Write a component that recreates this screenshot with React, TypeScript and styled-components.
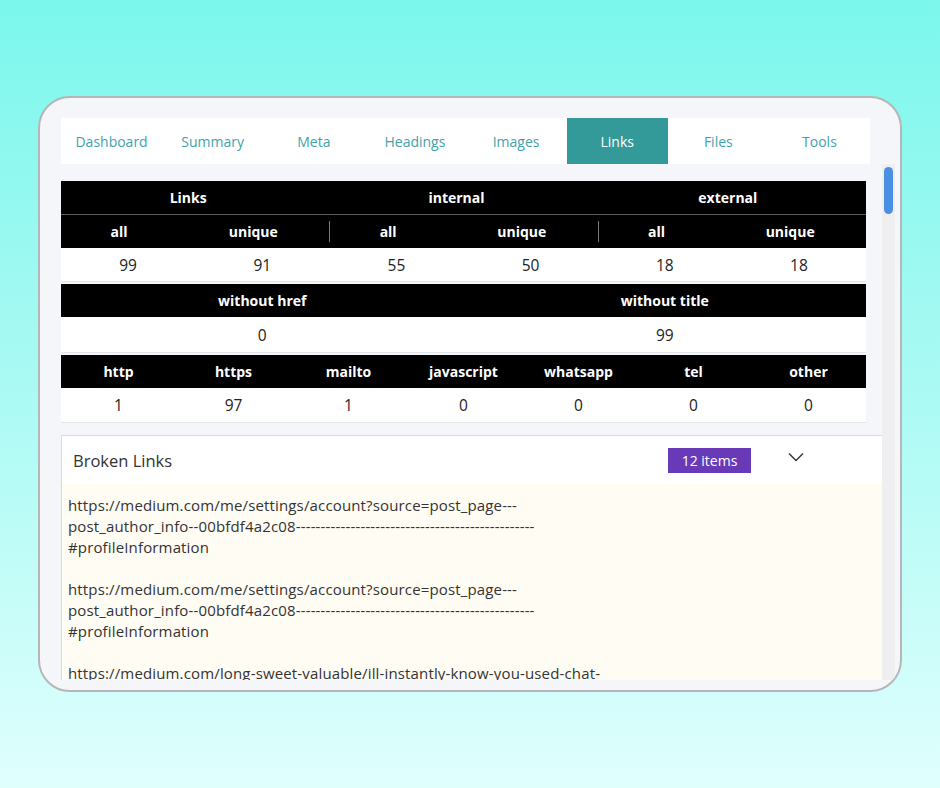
import React from "react";
import styled, { createGlobalStyle } from "styled-components";

const GlobalStyle = createGlobalStyle`
  html, body {
    margin: 0;
    padding: 0;
    height: 100%;
  }
  body {
    background: linear-gradient(180deg, #7cf7ec 0%, #abfaf4 50%, #dffffd 100%);
    font-family: "Open Sans", "Noto Sans", sans-serif;
  }
  #root {
    height: 100%;
  }
`;

const Page = styled.div`
  height: 788px;
  display: flex;
  align-items: center;
  justify-content: center;
`;

const Frame = styled.div`
  box-sizing: border-box;
  width: 864px;
  height: 596px;
  border: 2px solid #b6b6b6;
  border-radius: 32px;
  background: #f5f6fa;
  overflow: hidden;
  display: flex;
  flex-direction: column;
`;

const TabBar = styled.nav`
  margin: 20px 0 0 21px;
  width: 809px;
  height: 46px;
  flex: none;
  display: grid;
  grid-template-columns: repeat(8, 1fr);
  background: #ffffff;
`;

const Tab = styled.div<{ $active?: boolean }>`
  display: flex;
  align-items: center;
  justify-content: center;
  font-size: 14px;
  color: ${(p) => (p.$active ? "#ffffff" : "#3fa2ab")};
  background: ${(p) => (p.$active ? "#339999" : "transparent")};
`;

const Body = styled.div`
  flex: 1;
  min-height: 0;
  display: flex;
  padding-bottom: 10px;
`;

const Viewport = styled.div`
  flex: 1;
  min-width: 0;
  overflow: hidden;
  padding: 17px 0 0 21px;
`;

const Track = styled.div`
  width: 13px;
  margin-right: 5px;
  background: #efeff2;
  padding-top: 3px;
  display: flex;
  justify-content: center;
`;

const Thumb = styled.div`
  width: 9px;
  height: 47px;
  border-radius: 5px;
  background: #4a8fe2;
`;

const StatBlock = styled.div<{ $gap: number }>`
  width: 805px;
  margin-bottom: ${(p) => p.$gap}px;
`;

const HeadRow = styled.div<{ $cols: number; $divider?: boolean }>`
  display: grid;
  grid-template-columns: repeat(${(p) => p.$cols}, 1fr);
  height: 33px;
  background: #000;
  border-bottom: ${(p) => (p.$divider ? "1px solid #5c5c5c" : "none")};
`;

const HeadCell = styled.div<{ $shift?: number }>`
  display: flex;
  align-items: center;
  justify-content: center;
  color: #ffffff;
  font-weight: 700;
  font-size: 14px;
  padding-right: ${(p) => p.$shift ?? 0}px;
`;

const SubGroup = styled.div<{ $divider?: boolean }>`
  align-self: center;
  height: 21px;
  display: grid;
  grid-template-columns: 1fr 1fr;
  border-left: ${(p) => (p.$divider ? "1px solid #7a7a7a" : "none")};
`;

const ValueRow = styled.div<{ $cols: number; $h: number }>`
  display: grid;
  grid-template-columns: repeat(${(p) => p.$cols}, 1fr);
  height: ${(p) => p.$h}px;
  background: #ffffff;
  border-bottom: 1px solid #e4e5ea;
`;

const ValueCell = styled.div`
  display: flex;
  align-items: center;
  justify-content: center;
  color: #222;
  font-size: 15.5px;
`;

const Panel = styled.section`
  border: 1px solid #dadada;
  border-right: none;
  background: #fff;
`;

const PanelHeader = styled.div`
  height: 48px;
  display: flex;
  align-items: center;
  padding-left: 11px;
`;

const PanelTitle = styled.h3`
  flex: 1;
  margin: 0;
  font-size: 16.5px;
  font-weight: 400;
  color: #333;
`;

const Badge = styled.span`
  height: 25px;
  width: 83px;
  box-sizing: border-box;
  display: flex;
  align-items: center;
  justify-content: center;
  background: #683ab7;
  color: #fff;
  font-size: 14px;
`;

const Chevron = styled.svg`
  margin: 0 78px 6px 37px;
  flex: none;
`;

const PanelContent = styled.div`
  background: #fffcf3;
  padding: 11px 6px 0;
  font-size: 15px;
  letter-spacing: 0.15px;
  line-height: 21px;
  color: #333;
`;

const LinkItem = styled.p`
  margin: 0 0 21px;
`;

const DASHES = "------------------------------------------------";

const brokenLinks: string[][] = [
  [
    "https://medium.com/me/settings/account?source=post_page---",
    "post_author_info--00bfdf4a2c08" + DASHES,
    "#profileInformation",
  ],
  [
    "https://medium.com/me/settings/account?source=post_page---",
    "post_author_info--00bfdf4a2c08" + DASHES,
    "#profileInformation",
  ],
  [
    "https://medium.com/long-sweet-valuable/ill-instantly-know-you-used-chat-",
  ],
];

const tabs = ["Dashboard", "Summary", "Meta", "Headings", "Images", "Links", "Files", "Tools"];

export default function App() {
  return (
    <>
      <GlobalStyle />
      <Page>
        <Frame>
          <TabBar>
            {tabs.map((t) => (
              <Tab key={t} $active={t === "Links"}>
                {t}
              </Tab>
            ))}
          </TabBar>
          <Body>
            <Viewport>
              <StatBlock $gap={2}>
                <HeadRow $cols={3} $divider>
                  <HeadCell $shift={14}>Links</HeadCell>
                  <HeadCell $shift={14}>internal</HeadCell>
                  <HeadCell $shift={8}>external</HeadCell>
                </HeadRow>
                <HeadRow $cols={3}>
                  <SubGroup>
                    <HeadCell $shift={18}>all</HeadCell>
                    <HeadCell $shift={18}>unique</HeadCell>
                  </SubGroup>
                  <SubGroup $divider>
                    <HeadCell $shift={18}>all</HeadCell>
                    <HeadCell $shift={18}>unique</HeadCell>
                  </SubGroup>
                  <SubGroup $divider>
                    <HeadCell $shift={18}>all</HeadCell>
                    <HeadCell $shift={18}>unique</HeadCell>
                  </SubGroup>
                </HeadRow>
                <ValueRow $cols={6} $h={33}>
                  {["99", "91", "55", "50", "18", "18"].map((v, i) => (
                    <ValueCell key={i}>{v}</ValueCell>
                  ))}
                </ValueRow>
              </StatBlock>

              <StatBlock $gap={2}>
                <HeadRow $cols={2}>
                  <HeadCell>without href</HeadCell>
                  <HeadCell>without title</HeadCell>
                </HeadRow>
                <ValueRow $cols={2} $h={35}>
                  <ValueCell>0</ValueCell>
                  <ValueCell>99</ValueCell>
                </ValueRow>
              </StatBlock>

              <StatBlock $gap={12}>
                <HeadRow $cols={7}>
                  {["http", "https", "mailto", "javascript", "whatsapp", "tel", "other"].map((h) => (
                    <HeadCell key={h}>{h}</HeadCell>
                  ))}
                </HeadRow>
                <ValueRow $cols={7} $h={34}>
                  {["1", "97", "1", "0", "0", "0", "0"].map((v, i) => (
                    <ValueCell key={i}>{v}</ValueCell>
                  ))}
                </ValueRow>
              </StatBlock>

              <Panel>
                <PanelHeader>
                  <PanelTitle>Broken Links</PanelTitle>
                  <Badge>12 items</Badge>
                  <Chevron width="16" height="10" viewBox="0 0 16 10" fill="none">
                    <path d="M1 1.5 L8 8.5 L15 1.5" stroke="#333" strokeWidth="1.4" />
                  </Chevron>
                </PanelHeader>
                <PanelContent>
                  {brokenLinks.map((lines, i) => (
                    <LinkItem key={i}>
                      {lines.map((l, j) => (
                        <React.Fragment key={j}>
                          {j > 0 && <br />}
                          {l}
                        </React.Fragment>
                      ))}
                    </LinkItem>
                  ))}
                </PanelContent>
              </Panel>
            </Viewport>
            <Track>
              <Thumb />
            </Track>
          </Body>
        </Frame>
      </Page>
    </>
  );
}
